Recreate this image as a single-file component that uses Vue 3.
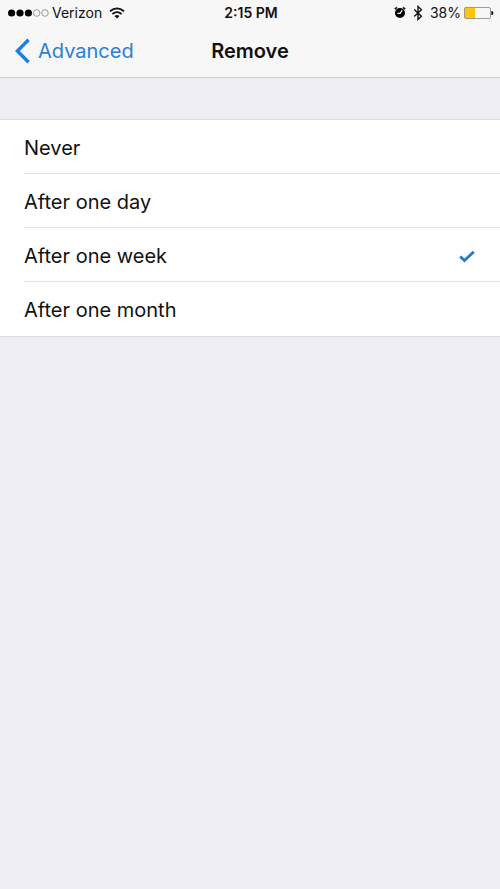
<script setup>
import { ref } from 'vue'

const options = [
  { value: 'never', label: 'Never' },
  { value: 'day', label: 'After one day' },
  { value: 'week', label: 'After one week' },
  { value: 'month', label: 'After one month' },
]
const selected = ref('week')
</script>

<template>
  <div class="screen">
    <header class="top">
      <div class="status">
        <div class="status-left">
          <svg class="signal" width="41" height="10" viewBox="0 0 41 10" aria-hidden="true">
            <circle cx="3.6" cy="5" r="3.6" />
            <circle cx="12" cy="5" r="3.6" />
            <circle cx="20.4" cy="5" r="3.6" />
            <circle class="empty" cx="28.7" cy="5" r="3.3" />
            <circle class="empty" cx="37" cy="5" r="3.3" />
          </svg>
          <span class="carrier">Verizon</span>
          <svg class="wifi" width="16" height="12" viewBox="0 0 16 12" aria-hidden="true">
            <path d="M1 4.3Q8-1.6 15 4.3" />
            <path d="M3.4 7Q8 3.2 12.6 7" />
            <path class="solid" d="M5.5 9.1Q8 7 10.5 9.1L8 11.6Z" />
          </svg>
        </div>
        <span class="time">2:15 PM</span>
        <div class="status-right">
          <svg class="alarm" width="12" height="13" viewBox="0 0 12 13" aria-hidden="true">
            <circle cx="6" cy="7" r="5" />
            <path class="bell" d="M.8 3.2 3 1.3M11.2 3.2 9 1.3" />
            <path class="hand" d="M8.2 4.2 6.2 7.3H3.4" />
          </svg>
          <svg class="bluetooth" width="10" height="16" viewBox="0 0 10 16" aria-hidden="true">
            <path d="M1.2 4.6 8.4 11.2 5 14.4V1.6L8.4 4.8 1.2 11.4" />
          </svg>
          <span class="percent">38%</span>
          <svg class="battery" width="30" height="12" viewBox="0 0 30 12" aria-hidden="true">
            <rect class="charge" x="0.5" y="0.5" width="10.5" height="11" rx="1" />
            <rect class="case" x=".5" y=".5" width="26" height="11" rx="1.5" />
            <path d="M27.4 4h.6Q29.4 4.5 29.4 6T28 8h-.6Z" />
          </svg>
        </div>
      </div>
      <nav class="bar">
        <a class="back" href="#advanced">
          <svg width="15" height="26" viewBox="0 0 15 26" aria-hidden="true">
            <path d="M13.6 1.8 2.4 13 13.6 24.2" />
          </svg>
          <span>Advanced</span>
        </a>
        <h1>Remove</h1>
      </nav>
    </header>

    <main>
      <div class="options" role="radiogroup" aria-label="Remove">
        <label v-for="option in options" :key="option.value" class="option">
          <input v-model="selected" type="radio" name="remove" :value="option.value" />
          <span class="row">
            <span>{{ option.label }}</span>
            <svg v-if="selected === option.value" width="16" height="13" viewBox="0 0 16 13" aria-hidden="true">
              <path d="M1.2 6.5 5.4 10.6 14.8 1.7" />
            </svg>
          </span>
        </label>
      </div>
    </main>
  </div>
</template>

<style>
body {
  margin: 0;
  background: #efeef4;
}
</style>

<style scoped>
.screen {
  min-height: 100vh;
  background: #efeef4;
  color: #111;
  font-family: Inter, "Liberation Sans", sans-serif;
}

.top {
  background: #f7f7f7;
  border-bottom: 1px solid #cbcacf;
}

.status,
.bar {
  display: grid;
  grid-template-columns: 1fr auto 1fr;
  align-items: center;
}

.status {
  height: 25px;
  padding: 0 6px 0 8px;
  font-size: 14px;
  line-height: 16px;
}

.status-left,
.status-right {
  display: flex;
  align-items: center;
}

.status-right {
  justify-content: flex-end;
}

.signal .empty {
  fill: none;
  stroke: #777;
  stroke-width: 0.7;
}

.carrier {
  margin-left: 3px;
}

.wifi {
  margin-left: 7px;
  fill: none;
  stroke: #111;
  stroke-width: 1.8;
}

.wifi .solid {
  fill: #111;
  stroke: none;
}

.time {
  font-weight: 600;
}

.bell {
  stroke: #111;
  stroke-width: 1.6;
}

.hand {
  fill: none;
  stroke: #f7f7f7;
  stroke-width: 1.2;
}

.bluetooth {
  margin-left: 7px;
  fill: none;
  stroke: #111;
  stroke-width: 1.4;
}

.percent {
  margin: 0 3px 0 7px;
}

.charge {
  fill: #fdc60b;
}

.case {
  fill: none;
  stroke: #888;
  stroke-width: 0.8;
}

.bar {
  height: 52px;
  padding: 0 15px;
}

.back {
  display: flex;
  align-items: center;
  gap: 8px;
  color: #2a80d6;
  font-size: 20px;
  text-decoration: none;
}

.back svg {
  fill: none;
  stroke: #1c7fe4;
  stroke-width: 3.4;
}

h1 {
  margin: 0;
  font-size: 20px;
  font-weight: 600;
}

main {
  padding-top: 41px;
}

.options {
  background: #fff;
  border-top: 1px solid #dcdbe0;
  border-bottom: 1px solid #dcdbe0;
}

.option {
  display: block;
  padding-left: 24px;
  cursor: pointer;
}

.option input {
  position: absolute;
  opacity: 0;
  pointer-events: none;
}

.row {
  box-sizing: border-box;
  height: 54px;
  padding: 3px 25px 0 0;
  display: flex;
  align-items: center;
  justify-content: space-between;
  border-bottom: 1px solid #e2e2e4;
  font-size: 20px;
}

.option:last-child .row {
  border-bottom-color: transparent;
}

.row svg {
  fill: none;
  stroke: #2478d0;
  stroke-width: 2.8;
}
</style>
